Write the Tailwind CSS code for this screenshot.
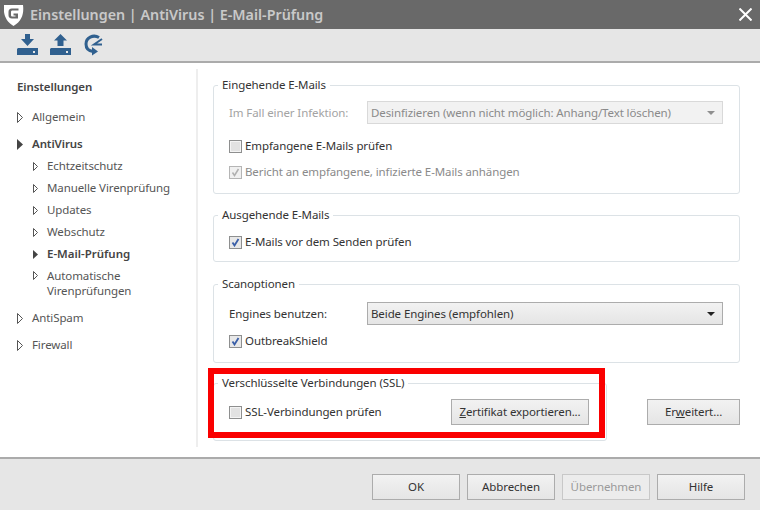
<!DOCTYPE html>
<html lang="de">
<head>
  <meta charset="UTF-8" />
  <title>Einstellungen | AntiVirus | E-Mail-Prüfung</title>
  <script src="https://cdn.jsdelivr.net/npm/@tailwindcss/browser@4"></script>
</head>
<body class="bg-white">
<div class="relative flex flex-col w-[760px] h-[510px] overflow-hidden bg-white text-[11.500px] tracking-[-0.100px] leading-[16px] text-[#333] font-['Noto_Sans','Open_Sans',sans-serif]">

  <!-- title bar -->
  <div class="flex items-center h-[29px] bg-[#696969] shrink-0">
    <svg class="ml-[4px] w-[20px] h-[22px]" viewBox="0 0 20 22">
      <path fill="#fff" fill-rule="evenodd" d="M0 1 H19 C20 9 18.500 17 9.500 22 C1 17 -1 9 0 1 Z M14.500 4.500 H8 C5.500 4.500 4.500 6 4.500 8 V11 C4.500 13 5.500 14.500 8 14.500 H14 V9.500 H9.500 V11.500 H11.500 V12.500 H8.500 C7.500 12.500 7 12 7 11 V8 C7 7 7.500 6.500 8.500 6.500 H14.500 Z"/>
    </svg>
    <span class="ml-[6px] text-[14.300px] tracking-normal font-semibold text-[#c9c9c9]">Einstellungen | AntiVirus | E-Mail-Prüfung</span>
    <svg class="ml-auto mr-[8px] w-[13px] h-[13px]" viewBox="0 0 13 13"><path d="M0.500 0.500 L12.500 12.500 M12.500 0.500 L0.500 12.500" stroke="#fff" stroke-width="2" fill="none"/></svg>
  </div>

  <!-- toolbar -->
  <div class="flex items-center gap-[11px] h-[34px] pl-[17px] bg-[#e6e6e6] border-b-2 border-[#ababab] shrink-0">
    <svg class="w-[22px] h-[22px]" viewBox="0 0 22 22">
      <path fill="#30608f" d="M8 0 H13 V5 H17 L10.500 12 L4 5 H8 Z"/>
      <path fill="#30608f" fill-rule="evenodd" d="M1 14 H21 V21 H0 V15 Z M16 17 V19 H18 V17 Z"/>
    </svg>
    <svg class="w-[22px] h-[22px]" viewBox="0 0 22 22">
      <path fill="#30608f" d="M10.500 0 L17 6.500 H13.500 V12 H7.500 V6.500 H4 Z"/>
      <path fill="#30608f" fill-rule="evenodd" d="M1 14 H21 V21 H0 V15 Z M16 17 V19 H18 V17 Z"/>
    </svg>
    <svg class="ml-[1px] w-[19px] h-[22px]" viewBox="0 0 19 22">
      <path fill="none" stroke="#30608f" stroke-width="3" d="M15 3.500 C9 0 2 4 2 10 C2 14.500 5 17 9 17.500"/>
      <path fill="#30608f" d="M8 13 L14 17.500 L8 21.500 Z"/>
      <path fill="none" stroke="#30608f" stroke-width="2" d="M18 5 L10 10.500 H18"/>
    </svg>
  </div>

  <!-- middle -->
  <div class="flex flex-1 min-h-0">
    <!-- navigation -->
    <nav class="w-[198px] mt-[6px] mb-[10px] pl-[17px] pt-[8px] border-r-2 border-[#eeeeee] shrink-0 text-[#555]">
      <div class="h-[20px] flex items-center font-semibold text-[#444]">Einstellungen</div>

      <div class="mt-[10px] h-[20px] flex items-center gap-[9px]">
        <svg class="w-[6px] h-[11px]" viewBox="0 0 6 11"><path d="M0.500 0.500 L5.500 5.500 L0.500 10.500 Z" fill="none" stroke="#555"/></svg>
        <span>Allgemein</span>
      </div>

      <div class="mt-[7px] h-[20px] flex items-center gap-[9px] font-semibold text-[#444]">
        <svg class="w-[6px] h-[11px]" viewBox="0 0 6 11"><path d="M0 0 L6 5.500 L0 11 Z" fill="#444"/></svg>
        <span>AntiVirus</span>
      </div>

      <div class="mt-[1px] pl-[16px]">
        <div class="h-[22px] flex items-center gap-[9px]">
          <svg class="w-[5px] h-[9px]" viewBox="0 0 5 9"><path d="M0.500 0.500 L4.500 4.500 L0.500 8.500 Z" fill="none" stroke="#555"/></svg>
          <span>Echtzeitschutz</span>
        </div>
        <div class="h-[22px] flex items-center gap-[9px]">
          <svg class="w-[5px] h-[9px]" viewBox="0 0 5 9"><path d="M0.500 0.500 L4.500 4.500 L0.500 8.500 Z" fill="none" stroke="#555"/></svg>
          <span>Manuelle Virenprüfung</span>
        </div>
        <div class="h-[22px] flex items-center gap-[9px]">
          <svg class="w-[5px] h-[9px]" viewBox="0 0 5 9"><path d="M0.500 0.500 L4.500 4.500 L0.500 8.500 Z" fill="none" stroke="#555"/></svg>
          <span>Updates</span>
        </div>
        <div class="h-[22px] flex items-center gap-[9px]">
          <svg class="w-[5px] h-[9px]" viewBox="0 0 5 9"><path d="M0.500 0.500 L4.500 4.500 L0.500 8.500 Z" fill="none" stroke="#555"/></svg>
          <span>Webschutz</span>
        </div>
        <div class="h-[22px] flex items-center gap-[9px] font-semibold text-[#444]">
          <svg class="w-[5px] h-[9px]" viewBox="0 0 5 9"><path d="M0 0 L5 4.500 L0 9 Z" fill="#444"/></svg>
          <span class="tracking-normal">E-Mail-Prüfung</span>
        </div>
        <div class="mt-[3px] flex items-start gap-[9px] leading-[15px]">
          <svg class="mt-[3px] w-[5px] h-[9px]" viewBox="0 0 5 9"><path d="M0.500 0.500 L4.500 4.500 L0.500 8.500 Z" fill="none" stroke="#555"/></svg>
          <span>Automatische<br>Virenprüfungen</span>
        </div>
      </div>

      <div class="mt-[10px] h-[20px] flex items-center gap-[9px]">
        <svg class="w-[6px] h-[11px]" viewBox="0 0 6 11"><path d="M0.500 0.500 L5.500 5.500 L0.500 10.500 Z" fill="none" stroke="#555"/></svg>
        <span>AntiSpam</span>
      </div>
      <div class="mt-[7px] h-[20px] flex items-center gap-[9px]">
        <svg class="w-[6px] h-[11px]" viewBox="0 0 6 11"><path d="M0.500 0.500 L5.500 5.500 L0.500 10.500 Z" fill="none" stroke="#555"/></svg>
        <span>Firewall</span>
      </div>
    </nav>

    <!-- settings -->
    <main class="flex-1 pl-[15px] pr-[20px] pt-[14px]">
      <fieldset class="h-[117px] border border-[#dce2e6] rounded-[3px] pl-[15px] pr-[16px]">
        <legend class="ml-[-11px] px-[4px] text-[#333]">Eingehende E-Mails</legend>
        <div class="mt-[8px] flex items-center h-[23px]">
          <span class="w-[138px] text-[#a3a3a3]">Im Fall einer Infektion:</span>
          <div class="flex-1 h-[23px] flex items-center justify-between pl-[3px] pr-[7px] bg-[#f2f2f2] border border-[#d9d9d9] text-[#8a8a8a]">
            <span>Desinfizieren (wenn nicht möglich: Anhang/Text löschen)</span>
            <svg class="w-[8px] h-[4px]" viewBox="0 0 8 4"><path d="M0 0 H8 L4 4 Z" fill="#8f8f8f"/></svg>
          </div>
        </div>
        <label class="mt-[12px] flex items-center gap-[3px] h-[20px]">
          <span class="w-[13px] h-[13px] border border-[#8e8f8f] bg-[#e2e2e2] shadow-[inset_0_0_0_1px_#f4f4f4]"></span>
          <span>Empfangene E-Mails prüfen</span>
        </label>
        <label class="mt-[6px] flex items-center gap-[3px] h-[20px] text-[#8a8a8a]">
          <span class="flex items-center justify-center w-[13px] h-[13px] border border-[#b5b5b5] bg-[#f0f0f0]">
            <svg class="w-[9px] h-[9px]" viewBox="0 0 9 9"><path d="M1.500 4.500 L3.500 7.500 L7.500 1" fill="none" stroke="#b0b0b0" stroke-width="1.500"/></svg>
          </span>
          <span>Bericht an empfangene, infizierte E-Mails anhängen</span>
        </label>
      </fieldset>

      <fieldset class="mt-[13px] h-[55px] border border-[#dce2e6] rounded-[3px] pl-[15px] pr-[16px]">
        <legend class="ml-[-11px] px-[4px] text-[#333]">Ausgehende E-Mails</legend>
        <label class="mt-[9px] flex items-center gap-[3px] h-[20px]">
          <span class="flex items-center justify-center w-[13px] h-[13px] border border-[#8e8f8f] bg-[#e8e8e8]">
            <svg class="w-[9px] h-[9px]" viewBox="0 0 9 9"><path d="M1.500 4.500 L3.500 7.500 L7.500 1" fill="none" stroke="#3a5fa8" stroke-width="1.800"/></svg>
          </span>
          <span>E-Mails vor dem Senden prüfen</span>
        </label>
      </fieldset>

      <fieldset class="mt-[14px] h-[87px] border border-[#dce2e6] rounded-[3px] pl-[15px] pr-[16px]">
        <legend class="ml-[-11px] px-[4px] text-[#333]">Scanoptionen</legend>
        <div class="mt-[10px] flex items-center h-[23px]">
          <span class="w-[138px]">Engines benutzen:</span>
          <div class="flex-1 h-[23px] flex items-center justify-between pl-[3px] pr-[7px] bg-gradient-to-b from-[#f2f2f2] to-[#e5e5e5] border border-[#acacac]">
            <span>Beide Engines (empfohlen)</span>
            <svg class="w-[8px] h-[4px]" viewBox="0 0 8 4"><path d="M0 0 H8 L4 4 Z" fill="#222"/></svg>
          </div>
        </div>
        <label class="mt-[6px] flex items-center gap-[3px] h-[20px]">
          <span class="flex items-center justify-center w-[13px] h-[13px] border border-[#8e8f8f] bg-[#e8e8e8]">
            <svg class="w-[9px] h-[9px]" viewBox="0 0 9 9"><path d="M1.500 4.500 L3.500 7.500 L7.500 1" fill="none" stroke="#3a5fa8" stroke-width="1.800"/></svg>
          </span>
          <span>OutbreakShield</span>
        </label>
      </fieldset>

      <div class="mt-[12px] flex items-end justify-between">
        <fieldset class="w-[394px] h-[66px] border border-[#dce2e6] rounded-[3px] pl-[15px] pr-[17px]">
          <legend class="ml-[-11px] px-[4px] text-[#333]">Verschlüsselte Verbindungen (SSL)</legend>
          <div class="mt-[8px] flex items-center justify-between h-[26px]">
            <label class="flex items-center gap-[3px]">
              <span class="w-[13px] h-[13px] border border-[#8e8f8f] bg-[#e2e2e2] shadow-[inset_0_0_0_1px_#f4f4f4]"></span>
              <span>SSL-Verbindungen prüfen</span>
            </label>
            <button class="w-[138px] h-[26px] bg-gradient-to-b from-[#f2f2f2] to-[#e5e5e5] border border-[#acacac]"><span class="underline">Z</span>ertifikat exportieren...</button>
          </div>
        </fieldset>
        <button class="mb-[16px] w-[93px] h-[26px] bg-gradient-to-b from-[#f2f2f2] to-[#e5e5e5] border border-[#acacac]">Er<span class="underline">w</span>eitert...</button>
      </div>
    </main>
  </div>

  <!-- footer -->
  <div class="flex justify-end gap-[7px] h-[53px] pt-[15px] pr-[15px] bg-[#e6e6e6] border-t-2 border-[#ababab] shrink-0">
    <button class="w-[88px] h-[26px] bg-gradient-to-b from-[#f2f2f2] to-[#e5e5e5] border border-[#acacac]">OK</button>
    <button class="w-[88px] h-[26px] bg-gradient-to-b from-[#f2f2f2] to-[#e5e5e5] border border-[#acacac]">Abbrechen</button>
    <button class="w-[88px] h-[26px] bg-[#ececec] border border-[#c8c8c8] text-[#9a9a9a]">Übernehmen</button>
    <button class="w-[88px] h-[26px] bg-gradient-to-b from-[#f2f2f2] to-[#e5e5e5] border border-[#acacac]">Hilfe</button>
  </div>

  <!-- red highlight drawn over the SSL group -->
  <div class="absolute left-[208px] top-[368px] w-[397px] h-[70px] border-[6px] border-[#fa0000]"></div>
</div>
</body>
</html>
